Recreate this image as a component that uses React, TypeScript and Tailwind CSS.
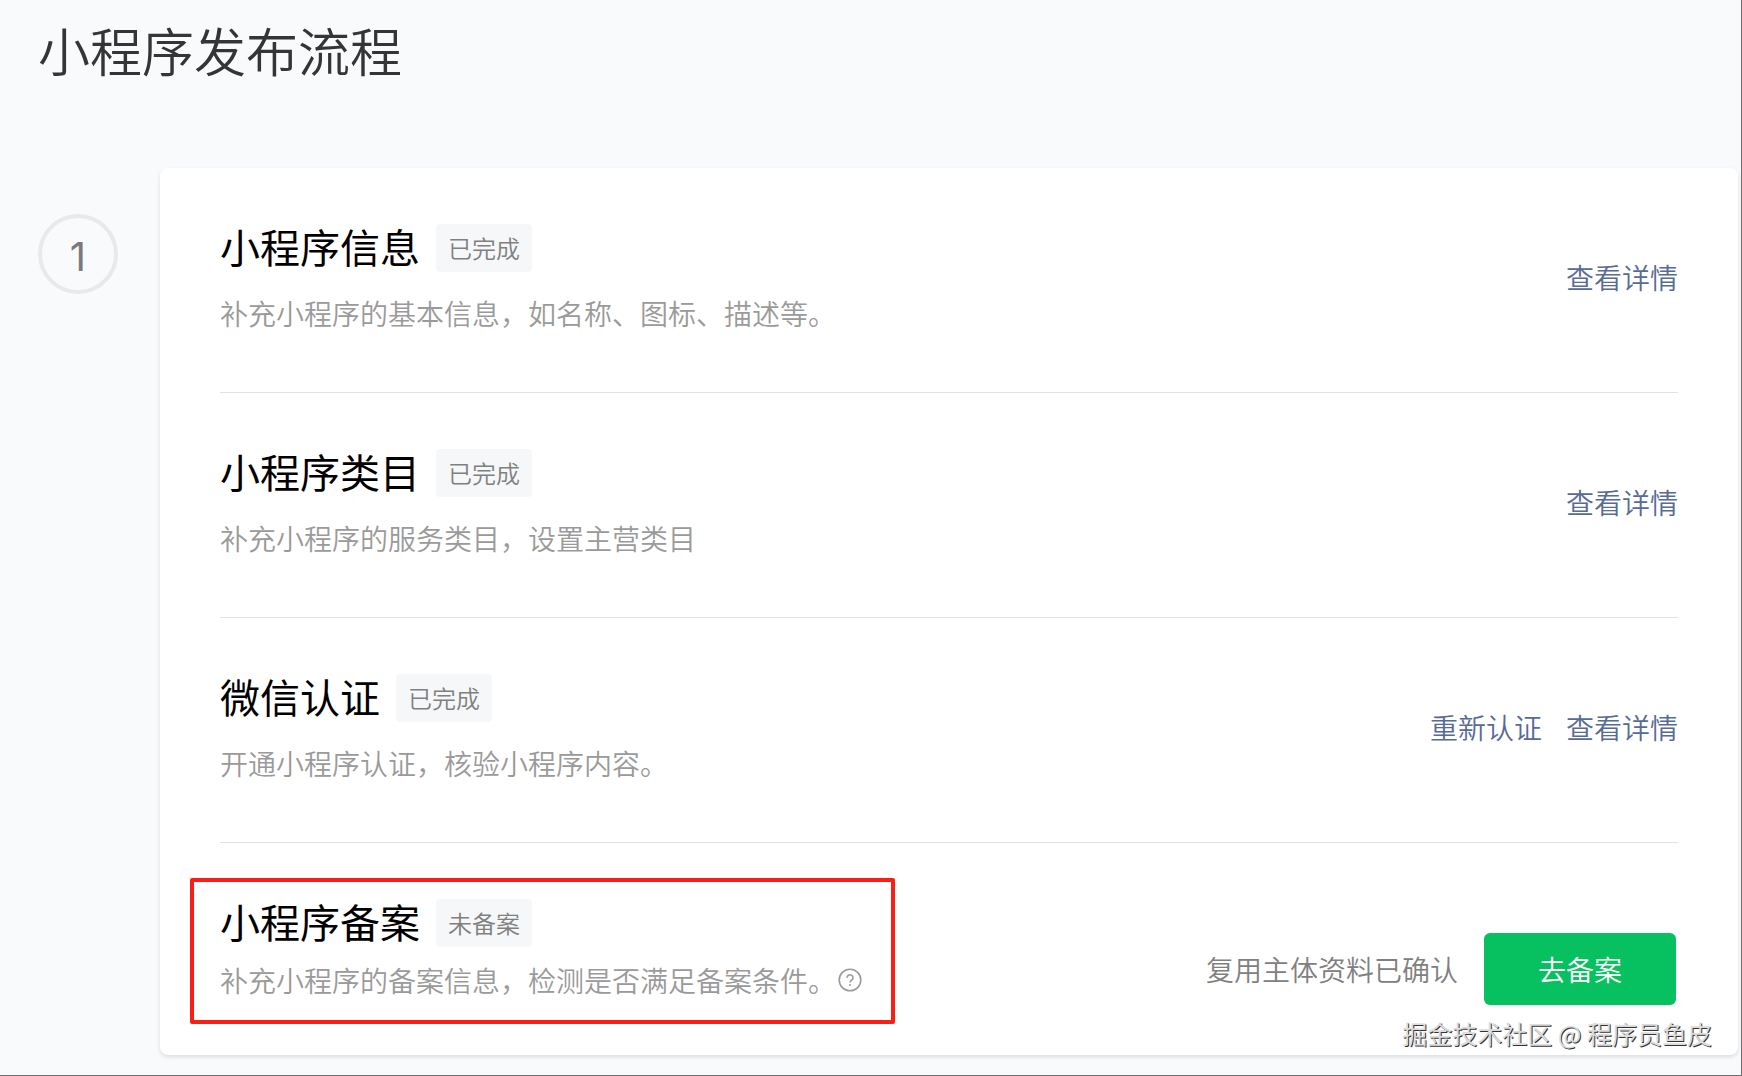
import React from "react";

type Item = {
  title: string;
  status: string;
  description: string;
  links: string[];
};

const items: Item[] = [
  {
    title: "小程序信息",
    status: "已完成",
    description: "补充小程序的基本信息，如名称、图标、描述等。",
    links: ["查看详情"],
  },
  {
    title: "小程序类目",
    status: "已完成",
    description: "补充小程序的服务类目，设置主营类目",
    links: ["查看详情"],
  },
  {
    title: "微信认证",
    status: "已完成",
    description: "开通小程序认证，核验小程序内容。",
    links: ["重新认证", "查看详情"],
  },
];

function Heading({ title, status }: { title: string; status: string }) {
  return (
    <div className="flex items-start gap-4">
      <h2 className="text-[40px] leading-[44px] font-normal text-black">{title}</h2>
      <span className="rounded-sm bg-[#f6f7f9] px-3 text-2xl leading-[48px] text-[#808080]">
        {status}
      </span>
    </div>
  );
}

function HelpIcon() {
  return (
    <svg viewBox="0 0 24 24" className="size-6" fill="none" stroke="currentColor" aria-hidden="true">
      <circle cx="12" cy="12" r="10.8" strokeWidth="1.6" />
      <path d="M9 9.8a3 3 0 1 1 4.6 2.5c-1 .7-1.6 1.1-1.6 2.2" strokeWidth="1.6" />
      <circle cx="12" cy="17" r="1" fill="currentColor" stroke="none" />
    </svg>
  );
}

export default function App() {
  return (
    <div className="relative flex min-h-screen flex-col border-r border-b border-[#6e6e70] bg-[#f9fafc] font-['Noto_Sans_CJK_SC',sans-serif] font-[350]">
      <h1 className="px-[38px] pt-[18px] text-[52px] leading-[64px] font-[350] text-[#353535]">小程序发布流程</h1>

      <main className="mt-[86px] flex items-start pr-[3px] pl-[38px]">
        <div className="mt-[46px] mr-[42px] flex size-20 shrink-0 items-center justify-center rounded-full border-4 border-[#e9e9eb] pt-1.5 font-['Inter',sans-serif] text-[40px] leading-none font-normal text-[#7a7a7a]">
          1
        </div>

        <section className="min-w-0 flex-1 rounded-lg bg-white px-[60px] shadow-[0_2px_4px_rgba(0,0,0,0.12)]">
          {items.map((item) => (
            <article
              key={item.title}
              className="flex items-center justify-between border-b border-[#e2e2e2] pt-14 pb-[60px]"
            >
              <div>
                <Heading title={item.title} status={item.status} />
                <p className="mt-[22px] text-[28px] leading-[38px] text-[#9a9a9a]">{item.description}</p>
              </div>
              <nav className="flex gap-6 pb-0.5 text-[28px] leading-[38px] text-[#576b95]">
                {item.links.map((link) => (
                  <a key={link} href="#">
                    {link}
                  </a>
                ))}
              </nav>
            </article>
          ))}

          <article className="flex items-end justify-between pt-14 pb-[50px]">
            <div className="relative mb-1.5">
              <div className="pointer-events-none absolute -top-[21px] -right-[33px] -bottom-[25px] -left-[30px] rounded-xs border-4 border-[#fa1e14]" />
              <Heading title="小程序备案" status="未备案" />
              <div className="mt-3.5 flex items-center gap-0.5 text-[#9a9a9a]">
                <p className="text-[28px] leading-[38px]">
                  补充小程序的备案信息，检测是否满足备案条件。
                </p>
                <button type="button" aria-label="帮助">
                  <HelpIcon />
                </button>
              </div>
            </div>
            <div className="mr-0.5 flex items-center gap-[26px] text-[28px]">
              <span className="leading-[38px] text-[#808080]">复用主体资料已确认</span>
              <button
                type="button"
                className="h-[72px] w-48 rounded-md bg-[#07c160] text-white"
              >
                去备案
              </button>
            </div>
          </article>
        </section>
      </main>

      <div className="absolute right-[29px] bottom-6 text-[25px] leading-9 font-normal text-[#dcdcdc] [text-shadow:1px_1px_0_#333]">
        掘金技术社区 @ 程序员鱼皮
      </div>
    </div>
  );
}
